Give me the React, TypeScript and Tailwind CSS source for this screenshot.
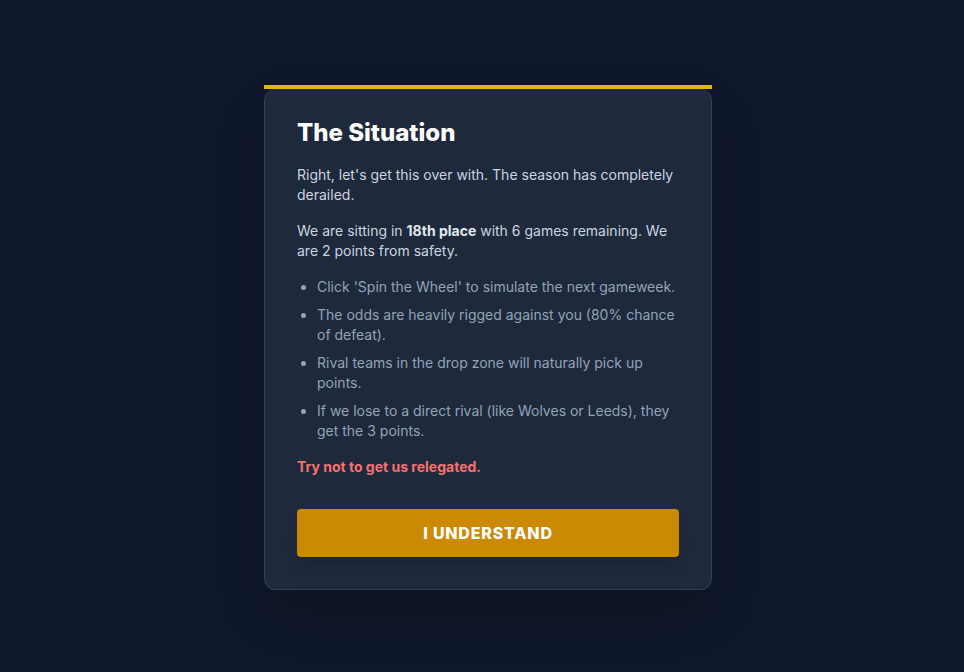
import React from 'react';

export default function App() {
  return (
    <div
      className="min-h-screen bg-[#0f172a] flex items-center justify-center pl-3"
      style={{ fontFamily: 'Inter, "Noto Sans", sans-serif' }}
    >
      <div className="w-[448px] mt-[2px] flex flex-col shadow-2xl">
        <div className="h-1 bg-[#eab308]" />
        <div className="bg-[#1e293b] border border-t-0 border-[#334155] rounded-xl px-8 pt-8 pb-8">
          <h2 className="text-2xl font-extrabold text-white mb-5 leading-6">The Situation</h2>
          <p className="text-sm text-[#cbd5e1] leading-5 mb-4">
            Right, let's get this over with. The season has completely derailed.
          </p>
          <p className="text-sm text-[#cbd5e1] leading-5 mb-4">
            We are sitting in <strong className="font-bold text-[#e2e8f0]">18th place</strong> with 6 games remaining. We are 2 points from safety.
          </p>
          <ul className="list-disc pl-5 text-sm text-[#94a3b8] leading-5 space-y-2 mb-4">
            <li>Click 'Spin the Wheel' to simulate the next gameweek.</li>
            <li>The odds are heavily rigged against you (80% chance of defeat).</li>
            <li>Rival teams in the drop zone will naturally pick up points.</li>
            <li>If we lose to a direct rival (like Wolves or Leeds), they get the 3 points.</li>
          </ul>
          <p className="text-sm font-bold text-[#f87171] leading-5">Try not to get us relegated.</p>
          <button className="mt-8 w-full h-12 rounded bg-[#ca8a04] text-white font-extrabold tracking-wider text-base uppercase shadow-lg">
            I Understand
          </button>
        </div>
      </div>
    </div>
  );
}
